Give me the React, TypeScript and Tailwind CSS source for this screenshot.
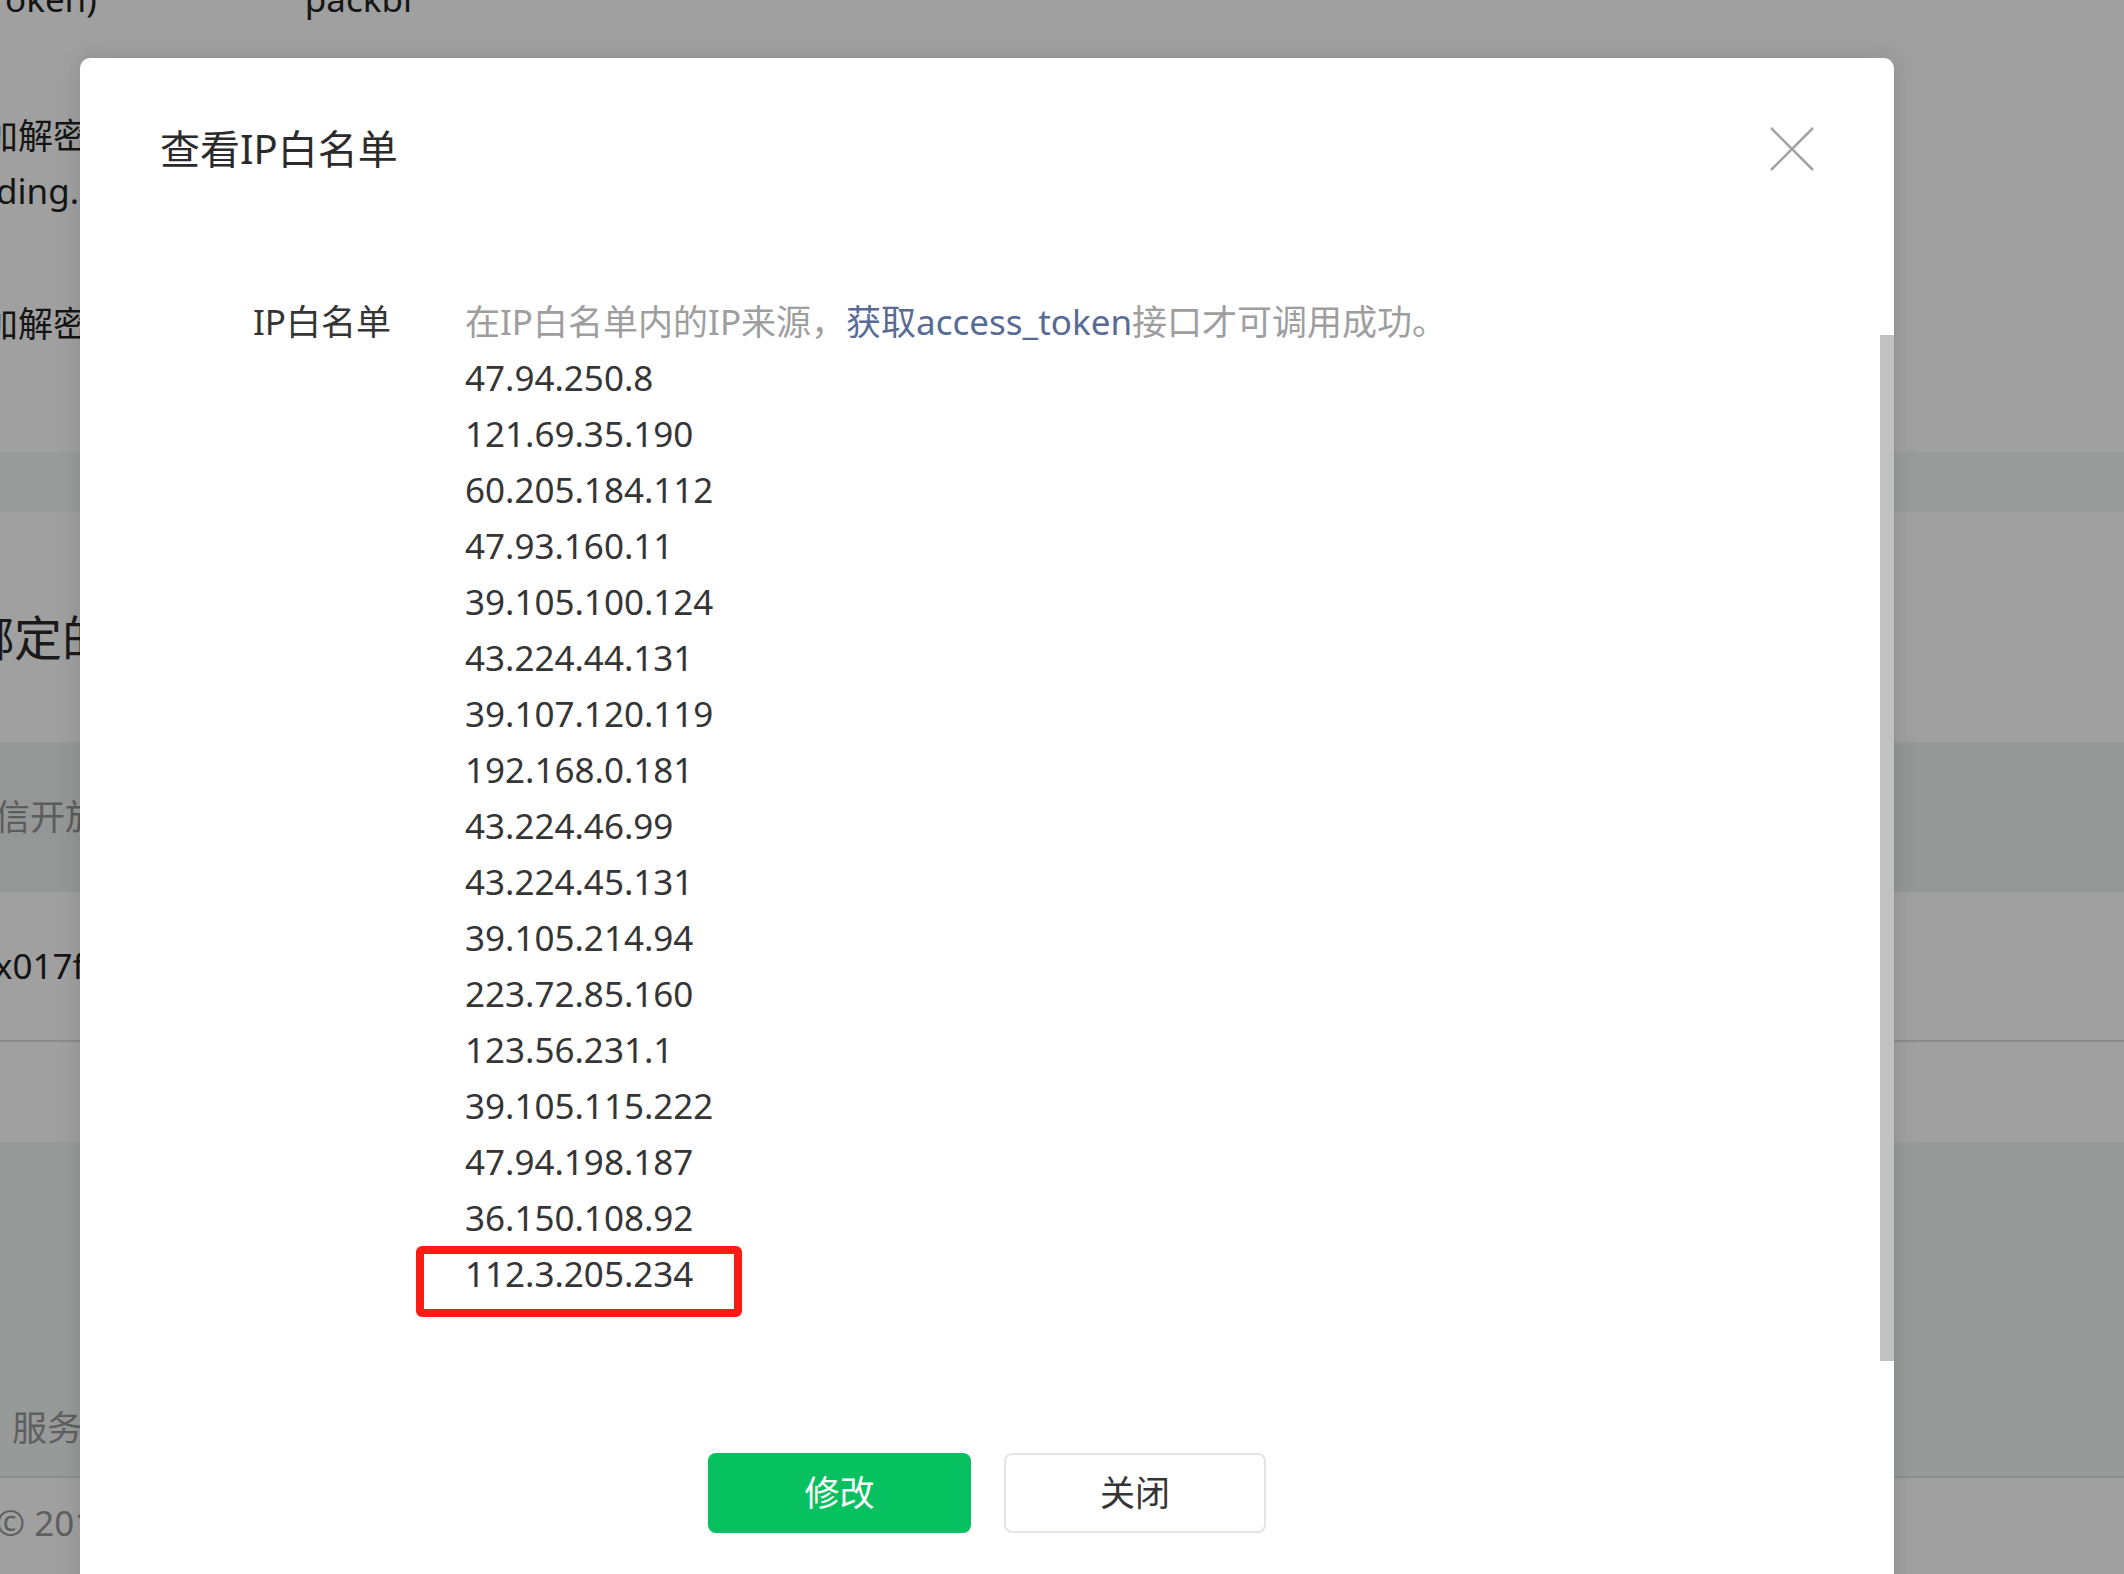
import React from "react";

const ips = [
  "47.94.250.8",
  "121.69.35.190",
  "60.205.184.112",
  "47.93.160.11",
  "39.105.100.124",
  "43.224.44.131",
  "39.107.120.119",
  "192.168.0.181",
  "43.224.46.99",
  "43.224.45.131",
  "39.105.214.94",
  "223.72.85.160",
  "123.56.231.1",
  "39.105.115.222",
  "47.94.198.187",
  "36.150.108.92",
  "112.3.205.234",
];

const font = "font-['Noto_Sans','Noto_Sans_CJK_SC',sans-serif]";

export default function App() {
  return (
    <div className={`relative w-[2124px] h-[1574px] overflow-hidden bg-[#a0a0a0] ${font}`}>
      {/* background page (dimmed) */}
      <div className="flex flex-col text-[35px] text-[#151515]">
        <div className="mt-[-29px] h-[56px] leading-[56px] flex">
          <span className="ml-[-12px]">Token)</span>
          <span className="ml-[208px]">packbi</span>
        </div>
        <div className="mt-[81px] h-[111px] leading-[55px] flex flex-col">
          <span className="ml-[-17px] whitespace-nowrap">加解密密钥</span>
          <span className="ml-[-4px] whitespace-nowrap">ding.</span>
        </div>
        <div className="mt-[77px] h-[56px] leading-[56px]">
          <span className="ml-[-17px] block whitespace-nowrap">加解密方式</span>
        </div>
        <div className="mt-[100px] h-[60px] bg-[#9a9b9b]" />
        <div className="h-[230px] flex items-center pt-[22px]">
          <span className="ml-[-34px] text-[48px] leading-[56px] text-[#1a1a1a] whitespace-nowrap">绑定的公众号</span>
        </div>
        <div className="h-[150px] bg-[#959696] flex items-center">
          <span className="ml-[-40px] text-[#5c5c5c] whitespace-nowrap">微信开放平台</span>
        </div>
        <div className="h-[150px] flex items-center border-b-2 border-[#8c8c8c]">
          <span className="ml-[-6px] whitespace-nowrap">x017f</span>
        </div>
        <div className="h-[100px]" />
        <div className="h-[334px] bg-[#989a99] flex items-end pb-[22px]">
          <span className="ml-[12px] text-[#5f5f5f] whitespace-nowrap">服务协议</span>
        </div>
        <div className="h-[2px] bg-[#8d8e8e]" />
        <div className="h-[90px] flex items-center">
          <span className="ml-[-4px] text-[#5f5f5f] whitespace-nowrap">© 2012-2024 Tencent</span>
        </div>
      </div>

      {/* modal */}
      <div className="absolute left-[80px] top-[58px] w-[1814px] h-[1600px] bg-white rounded-t-[10px] shadow-[0_0_24px_rgba(0,0,0,0.12)]">
        <div className="flex items-center justify-between px-[80px] pt-[63px] h-[119px]">
          <h1 className="text-[40px] leading-[56px] text-[#2b2b2b] font-normal">查看IP白名单</h1>
          <button className="w-[44px] h-[44px] flex items-center justify-center">
            <svg width="44" height="44" viewBox="0 0 44 44">
              <path d="M1 1 L43 43 M43 1 L1 43" stroke="#a3a3a3" strokeWidth="2.6" fill="none" />
            </svg>
          </button>
        </div>

        <div className="mt-[117px] flex text-[35px] leading-[56px]">
          <div className="w-[311px] text-right text-[#353535]">IP白名单</div>
          <div className="ml-[74px] flex flex-col">
            <div className="text-[#9e9e9e] whitespace-nowrap">
              在IP白名单内的IP来源，<span className="text-[#576b95]">获取access_token</span>接口才可调用成功。
            </div>
            {ips.map((ip, i) => (
              <div key={ip} className="relative text-[#353535]">
                {ip}
                {i === ips.length - 1 && (
                  <div className="absolute left-[-49px] top-0 w-[326px] h-[71px] border-[8px] border-[#fb1c16] rounded-[6px]" />
                )}
              </div>
            ))}
          </div>
        </div>

        <div className="mt-[151px] flex justify-center gap-[33px]">
          <button className="w-[263px] h-[80px] rounded-[8px] bg-[#07c160] text-white text-[35px]">修改</button>
          <button className="w-[262px] h-[80px] rounded-[8px] border-2 border-[#e4e4e8] bg-white text-[#353535] text-[35px]">关闭</button>
        </div>

        <div className="absolute right-0 top-[277px] w-[14px] h-[1026px] bg-[#c1c1c1]" />
      </div>
    </div>
  );
}
